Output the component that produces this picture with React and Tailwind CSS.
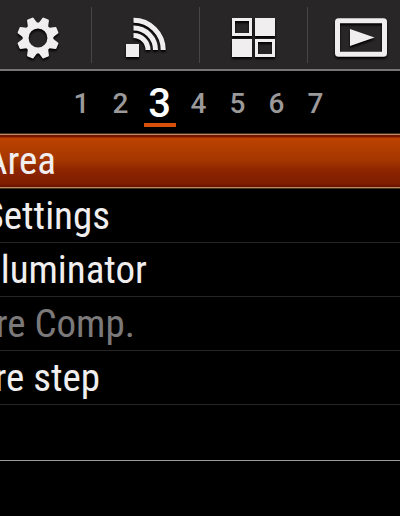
import React, { useState } from "react";
import clsx from "clsx";

function GearIcon() {
    return (
        <svg viewBox="0 0 44 44" className="h-11 w-11" fill="none">
            <g fill="#f1eeef">
                {[22.5, 67.5, 112.5, 157.5, 202.5, 247.5, 292.5, 337.5].map(
                    (angle) => (
                        <path
                            key={angle}
                            d="M16.6 9L18.5 1.9Q18.7 1 19.6 1H24.4Q25.3 1 25.5 1.9L27.4 9Z"
                            transform={`rotate(${angle} 22 22)`}
                        />
                    ),
                )}
            </g>
            <circle cx="22" cy="22" r="12.4" stroke="#f1eeef" strokeWidth="6" />
        </svg>
    );
}

function WirelessIcon() {
    return (
        <svg viewBox="0 0 44 44" className="h-11 w-11" fill="none">
            <path
                d="M9.5 19.5A14.5 14.5 0 0 1 24 34M9.5 12A22 22 0 0 1 31.5 34M9.5 4.3A29.7 29.7 0 0 1 39.2 34"
                stroke="#f1eeef"
                strokeWidth="5"
            />
            <path d="M2 28h13v13H2z" fill="#f1eeef" />
        </svg>
    );
}

function ApplicationIcon() {
    return (
        <svg viewBox="0 0 44 44" className="h-11 w-11" fill="none">
            <path d="M23 2h20v18H23zM0 23h20v18H0z" fill="#f1eeef" />
            <path
                d="M1.5 3.5h17v15h-17zM24.5 24.5h17v15h-17z"
                stroke="#f1eeef"
                strokeWidth="3"
            />
        </svg>
    );
}

function PlaybackIcon() {
    return (
        <svg viewBox="0 0 54 44" className="h-11 w-[54px]" fill="none">
            <rect
                x="2.5"
                y="4.7"
                width="47"
                height="33.6"
                rx="1"
                stroke="#f1eeef"
                strokeWidth="5"
            />
            <path d="M15 13L39.5 21.5L15 30Z" fill="#f1eeef" />
        </svg>
    );
}

const tabs = [
    { name: "Custom settings", icon: GearIcon },
    { name: "Wireless", icon: WirelessIcon },
    { name: "Application", icon: ApplicationIcon },
    { name: "Playback", icon: PlaybackIcon },
];

const pages = [1, 2, 3, 4, 5, 6, 7];

// the list is scrolled sideways, so each label runs off the left edge
const items = [
    { label: "Area", width: "w-14" },
    { label: "Settings", width: "w-[110px]" },
    { label: "lluminator", width: "w-[147px]" },
    { label: "re Comp.", width: "w-[135px]", disabled: true },
    { label: "re step", width: "w-[100px]" },
];

export default function App() {
    const [page, setPage] = useState(3);
    const [selected, setSelected] = useState("Area");

    return (
        <main className="min-h-screen overflow-hidden bg-black font-['Roboto_Condensed','Liberation_Sans_Narrow','Liberation_Sans',sans-serif] text-[#f1eeef]">
            <nav className="overflow-hidden border-b-2 border-[#777576] bg-[#292627]">
                <div className="-ml-4 flex items-center">
                    {tabs.map(({ name, icon: Icon }) => (
                        <button
                            key={name}
                            type="button"
                            aria-label={name}
                            className="flex h-[69px] w-[108px] shrink-0 items-center justify-center bg-[linear-gradient(#474546,#474546)] bg-[length:1px_56px] bg-[position:right_center] bg-no-repeat pt-1.5"
                        >
                            <span className="drop-shadow-[0_2px_1px_#000]">
                                <Icon />
                            </span>
                        </button>
                    ))}
                </div>
            </nav>

            <div className="flex h-[62px] pt-2 pl-[62px] font-[Roboto,sans-serif] font-medium">
                {pages.map((number) => (
                    <button
                        key={number}
                        type="button"
                        onClick={() => setPage(number)}
                        className="flex w-[39px] justify-center"
                    >
                        <span
                            className={clsx(
                                "h-12 w-8 border-b-4 text-center leading-[50px]",
                                page === number
                                    ? "border-[#d84f0c] text-[40px] text-white"
                                    : "border-transparent text-[28px] text-[#9b999a]",
                            )}
                        >
                            {number}
                        </span>
                    </button>
                ))}
            </div>

            <div className="border-b border-[#9c9c9c]">
                {items.map(({ label, width, disabled }) => (
                    <button
                        key={label}
                        type="button"
                        disabled={disabled}
                        onClick={() => setSelected(label)}
                        className={clsx(
                            "flex w-full items-center overflow-hidden text-[39px]",
                            selected === label
                                ? "h-14 border-y border-[#453420] bg-[linear-gradient(#b98a61_0_1px,#791600_1px_3px,#bd4300_4px,#a33600_50%,#8f2600_65%,#7e1d00_92%,#641000_53px,#b98a61_53px)]"
                                : "h-[54px] border-b border-[#252525]",
                            disabled && "text-[#7b797a]",
                        )}
                    >
                        <span
                            className={clsx(
                                "flex shrink-0 justify-end leading-[52px] whitespace-nowrap",
                                width,
                            )}
                        >
                            {label}
                        </span>
                    </button>
                ))}
                <div className="h-[55px]" />
            </div>
        </main>
    );
}
